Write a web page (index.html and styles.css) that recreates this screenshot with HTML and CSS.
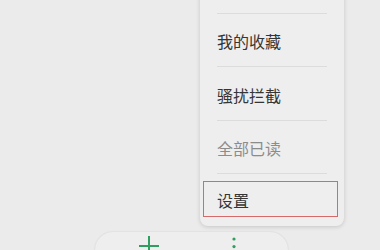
FILE: index.html
```html
<!DOCTYPE html>
<html lang="zh">
<head>
<meta charset="utf-8">
<link rel="stylesheet" href="styles.css">
</head>
<body>
<div class="screen">
  <div class="bottom-bar">
    <svg class="plus" width="20" height="20" viewBox="0 0 20 20"><path d="M10 0V20M0 10H20" stroke="#2f9e61" stroke-width="2" fill="none"/></svg>
    <svg class="more" width="4" height="20" viewBox="0 0 4 20"><circle cx="2" cy="2" r="1.6" fill="#2f9e61"/><circle cx="2" cy="9.6" r="1.6" fill="#2f9e61"/><circle cx="2" cy="17.2" r="1.6" fill="#2f9e61"/></svg>
  </div>
  <div class="menu">
    <div class="divider"></div>
    <div class="item">我的收藏</div>
    <div class="divider"></div>
    <div class="item">骚扰拦截</div>
    <div class="divider"></div>
    <div class="item muted">全部已读</div>
    <div class="divider"></div>
    <div class="item highlight">设置</div>
  </div>
</div>
</body>
</html>
```
FILE: styles.css
```css
html, body {
  margin: 0;
  padding: 0;
  background: #ebebeb;
}
.screen {
  position: relative;
  width: 380px;
  height: 250px;
  overflow: hidden;
  display: flex;
  flex-direction: column;
  justify-content: flex-end;
  font-family: "Noto Sans CJK SC", "Noto Sans", sans-serif;
}
.bottom-bar {
  margin-left: 95px;
  width: 193px;
  height: 36px;
  margin-bottom: -18px;
  box-sizing: border-box;
  border-radius: 18px;
  background: #eeeeee;
  box-shadow: 0 0 2px rgba(0,0,0,0.12);
  display: flex;
  justify-content: space-between;
  align-items: flex-start;
  padding: 4px 52px 0 44px;
}
.more {
  margin-top: 1px;
}
.menu {
  position: absolute;
  left: 200px;
  top: -20px;
  width: 144px;
  padding-top: 32.5px;
  background: #eeeeee;
  border-radius: 8px;
  box-shadow: 0 1px 4px rgba(0,0,0,0.16);
}
.item {
  height: 52.5px;
  box-sizing: border-box;
  padding: 3px 0 0 17px;
  display: flex;
  align-items: center;
  font-size: 16px;
  color: #353535;
}
.item.muted {
  color: #8c8c8c;
}
.divider {
  height: 1px;
  margin: 0 17px;
  background: #dcdcdc;
}
.item.highlight {
  height: 36px;
  margin: 6.5px 6px 9px 3px;
  padding-left: 13px;
  border: 1px solid #d46a6a;
}
```
